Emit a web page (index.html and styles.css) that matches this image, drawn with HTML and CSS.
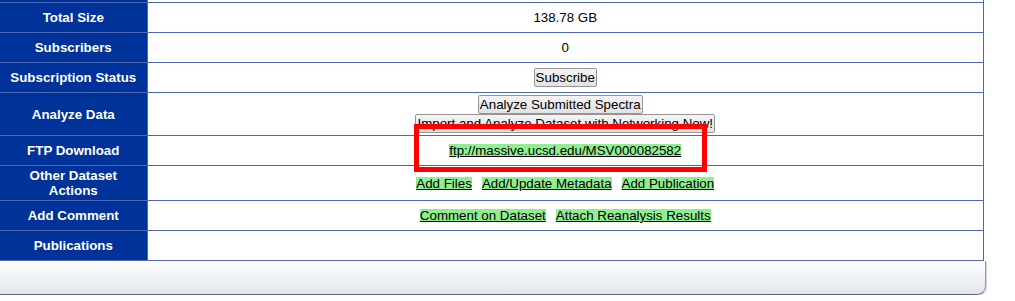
FILE: index.html
```html
<!DOCTYPE html>
<html>
<head>
<meta charset="utf-8">
<link rel="stylesheet" href="styles.css">
</head>
<body>
<div class="panel">
  <table class="details">
    <colgroup><col class="col-lbl"><col class="col-val"></colgroup>
    <tr class="cut"><td class="lbl"></td><td class="val"></td></tr>
    <tr class="r30"><td class="lbl">Total Size</td><td class="val">138.78 GB</td></tr>
    <tr class="r30"><td class="lbl">Subscribers</td><td class="val">0</td></tr>
    <tr class="r30"><td class="lbl">Subscription Status</td><td class="val"><button class="btn">Subscribe</button></td></tr>
    <tr class="r43"><td class="lbl">Analyze Data</td><td class="val"><div class="stack"><button class="btn btn-first">Analyze Submitted Spectra</button><button class="btn">Import and Analyze Dataset with Networking Now!</button></div></td></tr>
    <tr class="r30"><td class="lbl">FTP Download</td><td class="val"><a class="lnk" href="#">ftp://massive.ucsd.edu/MSV000082582</a></td></tr>
    <tr class="r35"><td class="lbl">Other Dataset Actions</td><td class="val"><div class="links"><a class="lnk" href="#">Add Files</a><a class="lnk" href="#">Add/Update Metadata</a><a class="lnk" href="#">Add Publication</a></div></td></tr>
    <tr class="r30"><td class="lbl">Add Comment</td><td class="val"><div class="links"><a class="lnk" href="#">Comment on Dataset</a><a class="lnk" href="#">Attach Reanalysis Results</a></div></td></tr>
    <tr class="r30"><td class="lbl">Publications</td><td class="val"></td></tr>
  </table>
  <div class="footer"></div>
  <div class="highlight"></div>
</div>
</body>
</html>
```
FILE: styles.css
```css
html, body {
  margin: 0;
  padding: 0;
  background: #ffffff;
}
body {
  font-family: "Liberation Sans", Arial, sans-serif;
  font-size: 13.333px;
  color: #000;
}
.panel {
  position: relative;
  width: 986px;
}
.details {
  border-collapse: collapse;
  width: 984px;
  table-layout: fixed;
}
.col-lbl { width: 147px; }
.details td {
  border: 1px solid #4d68b3;
  padding: 0 5px;
  text-align: center;
  vertical-align: middle;
}
.details tr.cut td {
  border-top: none;
}
.details td.lbl {
  background: #003399;
  color: #ffffff;
  font-weight: bold;
  border-left: none;
}
.details td.val {
  background: #ffffff;
}
.cut td {
  height: 2px;
  padding: 0;
  font-size: 0;
  line-height: 0;
}
.r30 { height: 30px; }
.r43 { height: 43px; }
.r35 { height: 35px; }

.btn {
  font-family: "Liberation Sans", Arial, sans-serif;
  font-size: 13.333px;
  line-height: 15px;
  color: #000;
  background: linear-gradient(#f4f4f4, #e2e2e2);
  border: 1px solid #959595;
  border-radius: 2px;
  padding: 1px 1px;
  margin: 0;
}
.btn-first {
  margin-right: 10px;
}
.stack {
  display: flex;
  flex-direction: column;
  align-items: center;
}
.lnk {
  color: #000;
  background: #90ee90;
  text-decoration: underline;
  display: inline-block;
  line-height: 13px;
}
.links {
  display: flex;
  justify-content: center;
  gap: 10px;
}
.footer {
  height: 33px;
  background: linear-gradient(#ffffff, #e2e6eb);
  border-bottom: 1px solid #55617d;
  border-right: 1px solid #8d97aa;
  border-bottom-right-radius: 9px;
  box-shadow: 1px 1px 1px rgba(60, 70, 90, 0.25);
}
.highlight {
  position: absolute;
  left: 414px;
  top: 124px;
  width: 283px;
  height: 38px;
  border: 5px solid #ff0000;
}
```
